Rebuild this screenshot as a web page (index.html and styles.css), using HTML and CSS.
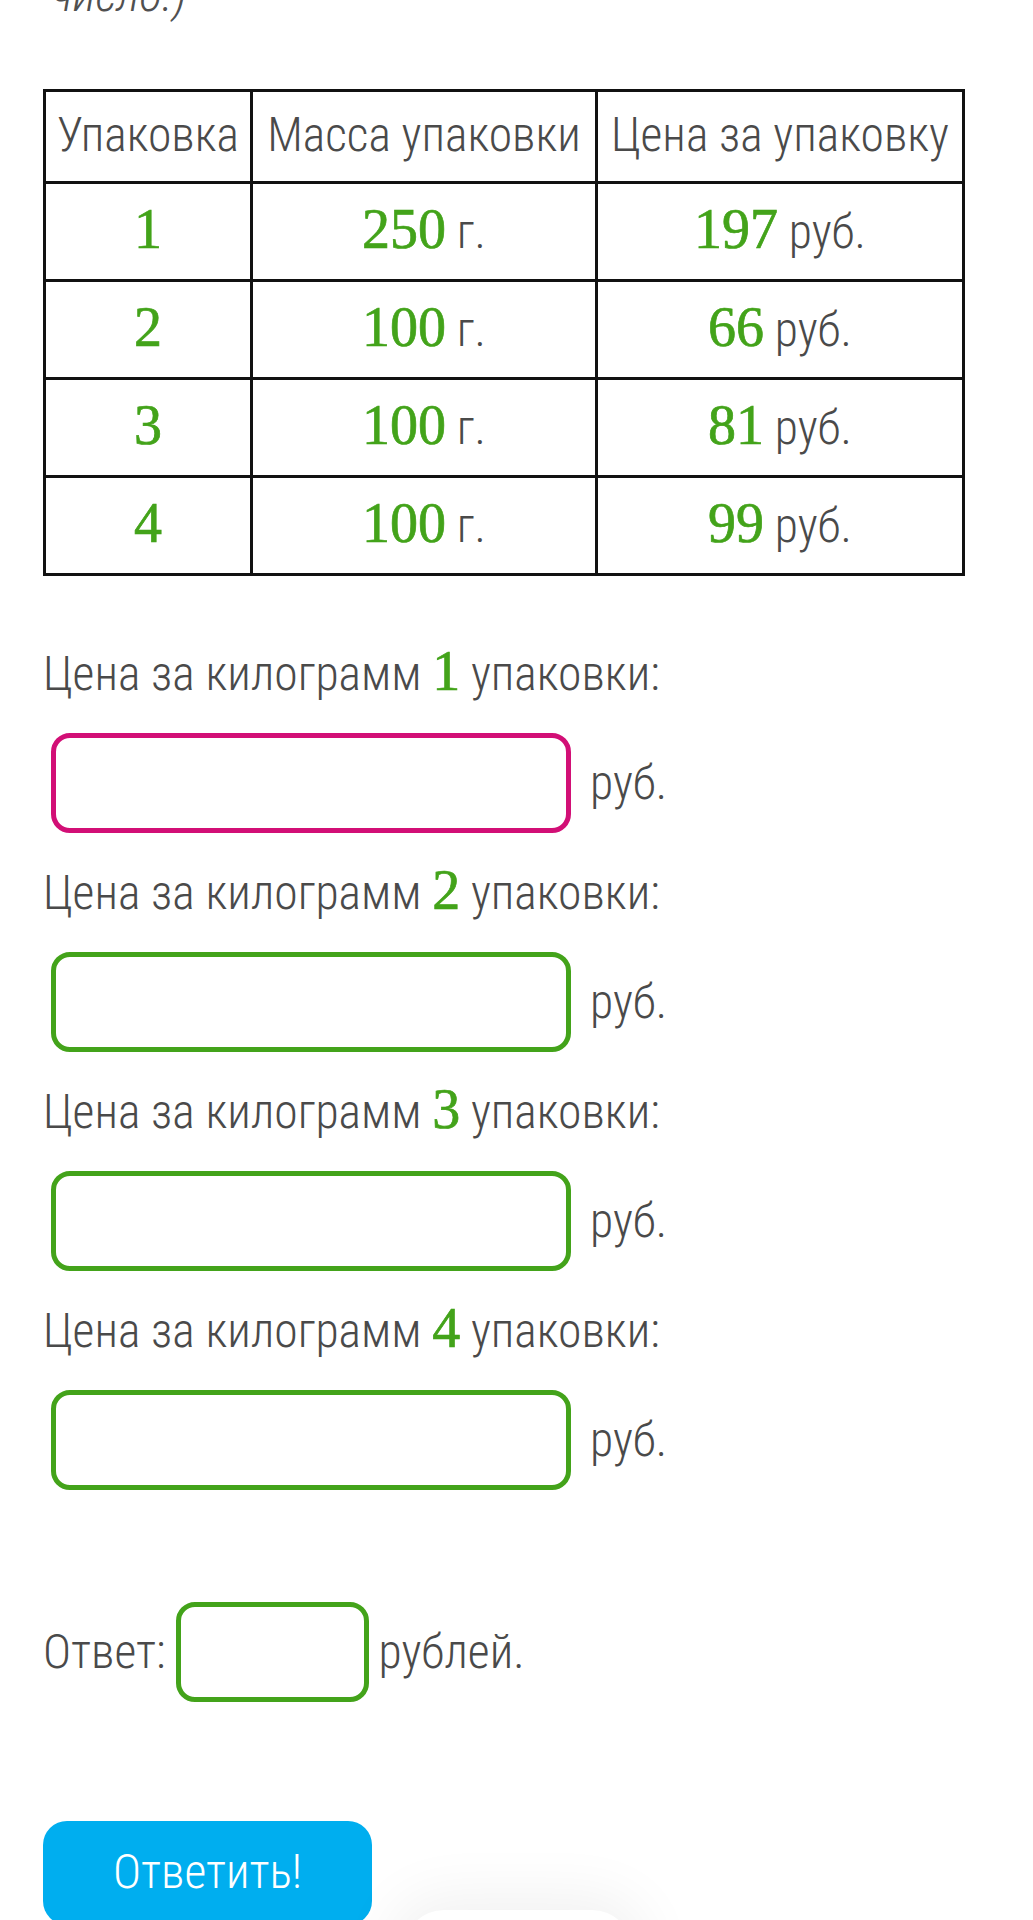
FILE: index.html
```html
<!DOCTYPE html>
<html lang="ru">
<head>
<meta charset="utf-8">
<title>Цена за килограмм</title>
<link rel="stylesheet" href="styles.css">
</head>
<body>
<main class="page">
  <p class="hint">число.)</p>

  <table class="pack-table">
    <thead>
      <tr class="head-row">
        <th class="c1">Упаковка</th>
        <th class="c2">Масса упаковки</th>
        <th class="c3">Цена за упаковку</th>
      </tr>
    </thead>
    <tbody>
      <tr class="body-row">
        <td><span class="num">1</span></td>
        <td><span class="num">250</span> г.</td>
        <td><span class="num">197</span> руб.</td>
      </tr>
      <tr class="body-row">
        <td><span class="num">2</span></td>
        <td><span class="num">100</span> г.</td>
        <td><span class="num">66</span> руб.</td>
      </tr>
      <tr class="body-row">
        <td><span class="num">3</span></td>
        <td><span class="num">100</span> г.</td>
        <td><span class="num">81</span> руб.</td>
      </tr>
      <tr class="body-row">
        <td><span class="num">4</span></td>
        <td><span class="num">100</span> г.</td>
        <td><span class="num">99</span> руб.</td>
      </tr>
    </tbody>
  </table>

  <section class="questions">
    <div class="question">
      <p class="q-label">Цена за килограмм <span class="num">1</span> упаковки:</p>
      <div class="field"><span class="box box-error"></span><span class="unit">руб.</span></div>
    </div>
    <div class="question">
      <p class="q-label">Цена за килограмм <span class="num">2</span> упаковки:</p>
      <div class="field"><span class="box"></span><span class="unit">руб.</span></div>
    </div>
    <div class="question">
      <p class="q-label">Цена за килограмм <span class="num">3</span> упаковки:</p>
      <div class="field"><span class="box"></span><span class="unit">руб.</span></div>
    </div>
    <div class="question">
      <p class="q-label">Цена за килограмм <span class="num">4</span> упаковки:</p>
      <div class="field"><span class="box"></span><span class="unit">руб.</span></div>
    </div>
  </section>

  <div class="answer-row">
    <span class="answer-text">Ответ:</span>
    <span class="box box-small"></span>
    <span class="answer-text">рублей.</span>
  </div>

  <button class="submit" type="button">Ответить!</button>

  <div class="floating-pill"></div>
</main>
</body>
</html>
```
FILE: styles.css
```css
html, body {
  margin: 0;
  padding: 0;
  background: #ffffff;
}

body {
  overflow: hidden;
}

.page {
  position: relative;
  height: 1920px;
  overflow: hidden;
  padding-left: 43px;
  font-family: Roboto, "Liberation Sans", sans-serif;
  font-weight: 300;
  font-stretch: 87.5%;
  font-size: 47.6px;
  color: #4a4a4a;
  box-sizing: border-box;
}

.hint {
  margin: -33px 0 0 8px;
  height: 56px;
  line-height: 56px;
  font-style: italic;
  color: #505050;
}

.num {
  font-family: "Liberation Serif", "Times New Roman", serif;
  font-stretch: normal;
  font-weight: 400;
  font-size: 56px;
  line-height: 40px;
  color: #43a31a;
  -webkit-text-stroke: 0.7px #43a31a;
}

/* table */
.pack-table {
  margin-top: 66px;
  border-spacing: 0;
  border-left: 3px solid #111;
  border-top: 3px solid #111;
  table-layout: fixed;
  width: 922px;
}

.pack-table th,
.pack-table td {
  box-sizing: border-box;
  border-right: 3px solid #111;
  border-bottom: 3px solid #111;
  padding: 0;
  text-align: center;
  vertical-align: middle;
  font-weight: 300;
  line-height: 56px;
  white-space: nowrap;
}

.pack-table .c1 { width: 207px; }
.pack-table .c2 { width: 345px; }
.pack-table .c3 { width: 367px; }

.head-row { height: 92px; }
.body-row { height: 98px; }

.pack-table th {
  padding-bottom: 4px;
}

/* questions */
.questions {
  padding-top: 70px;
}

.q-label {
  margin: 0;
  height: 56px;
  line-height: 56px;
  white-space: nowrap;
}

.field {
  display: flex;
  align-items: center;
  gap: 19px;
  padding: 31px 0 32px 8px;
}

.box {
  display: block;
  box-sizing: border-box;
  width: 520px;
  height: 100px;
  border: 5px solid #43a31a;
  border-radius: 19px;
  background: #fff;
  flex: none;
}

.box-error {
  border-color: #d20f76;
}

.unit {
  line-height: 56px;
}

/* answer */
.answer-row {
  display: flex;
  align-items: center;
  gap: 10px;
  margin-top: 80px;
}

.box-small {
  width: 193px;
}

.answer-text {
  line-height: 56px;
}

/* submit */
.submit {
  display: block;
  margin-top: 119px;
  width: 329px;
  height: 104px;
  border: none;
  border-radius: 24px;
  background: #00aeef;
  color: #ffffff;
  font-family: Roboto, "Liberation Sans", sans-serif;
  font-weight: 300;
  font-stretch: 87.5%;
  font-size: 47.6px;
  padding: 0 0 2px 0;
}

.floating-pill {
  position: absolute;
  left: 404px;
  top: 1910px;
  width: 228px;
  height: 90px;
  border-radius: 40px;
  background: #ffffff;
  box-shadow: 0 0 60px 14px rgba(0, 0, 0, 0.06);
}
```
